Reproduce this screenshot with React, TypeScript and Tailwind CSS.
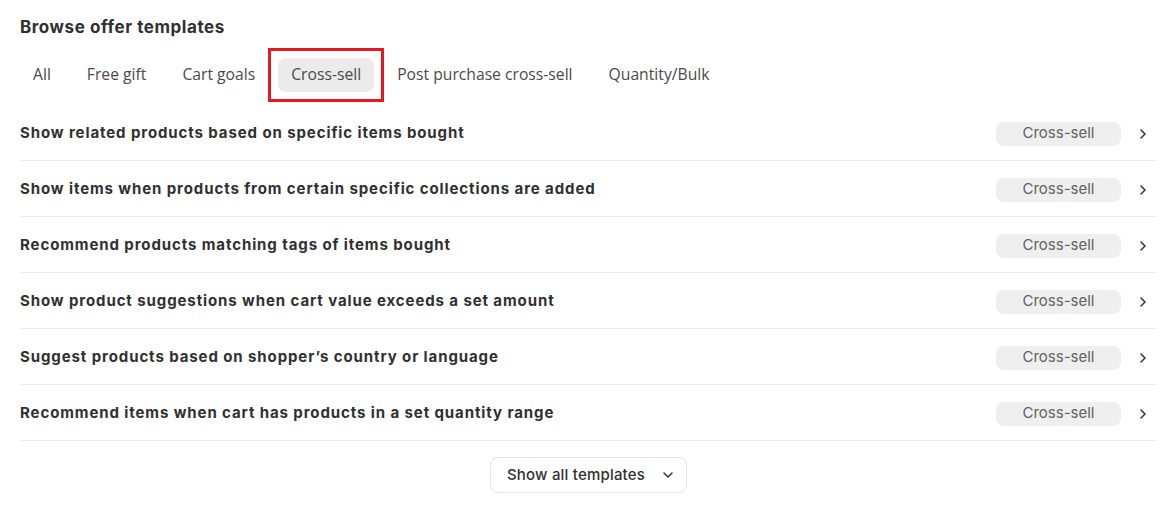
import { ChevronDown, ChevronRight } from "lucide-react";

const tabs = ["All", "Free gift", "Cart goals", "Cross-sell", "Post purchase cross-sell", "Quantity/Bulk"];

const templates = [
  "Show related products based on specific items bought",
  "Show items when products from certain specific collections are added",
  "Recommend products matching tags of items bought",
  "Show product suggestions when cart value exceeds a set amount",
  "Suggest products based on shopper\u2019s country or language",
  "Recommend items when cart has products in a set quantity range",
];

export default function App() {
  return (
    <div className="w-[1160px] h-[507px] bg-white pl-5 pr-[3px] pt-4 font-['Inter',sans-serif] text-[#303030]">
      {/* Heading */}
      <h2 className="h-[22px] text-[17px] leading-[22px] font-bold tracking-[0.55px] text-[#303030]">
        Browse offer templates
      </h2>

      {/* Tabs */}
      <div className="mt-5 flex items-center gap-[10px] font-['Open_Sans',sans-serif]">
        {tabs.map((t) => {
          const active = t === "Cross-sell";
          return (
            <div key={t} className="relative">
              <button
                className={`h-[34px] px-[13px] rounded-lg text-[15.7px] font-medium text-[#4a4a4a] ${
                  active ? "bg-[#ebebeb]" : ""
                }`}
              >
                {t}
              </button>
              {active && (
                <span className="absolute -inset-[10px] border-[3px] border-[#e5191f] pointer-events-none" />
              )}
            </div>
          );
        })}
      </div>

      {/* Template rows */}
      <div className="mt-[13px]">
        {templates.map((t) => (
          <div
            key={t}
            className="h-[56px] flex items-center justify-between border-b border-[#ebebeb]"
          >
            <span className="pt-[2px] text-[15px] font-bold tracking-[0.9px] text-[#303030]">{t}</span>
            <div className="flex items-center gap-[14px] pr-[6px] pt-[2px]">
              <span className="w-[125px] h-[24px] rounded-lg bg-[#efefef] flex items-center justify-center text-[15px] text-[#616161]">
                Cross-sell
              </span>
              <ChevronRight className="w-4 h-4 text-[#303030]" strokeWidth={2.25} />
            </div>
          </div>
        ))}
      </div>

      {/* Show all */}
      <div className="mt-4 flex justify-center">
        <button className="h-[36px] pl-4 pr-[10px] rounded-lg border border-[#e3e3e3] flex items-center gap-[15px] text-[15px] font-medium tracking-[0.2px] text-[#303030]">
          Show all templates
          <ChevronDown className="w-4 h-4 text-[#303030]" strokeWidth={2.25} />
        </button>
      </div>
    </div>
  );
}
